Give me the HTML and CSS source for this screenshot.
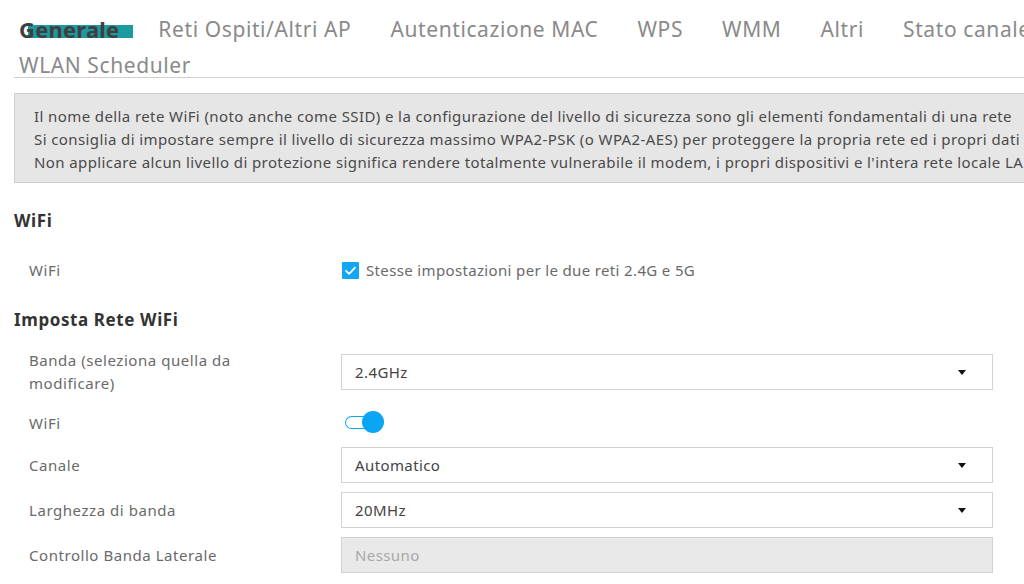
FILE: index.html
```html
<!DOCTYPE html>
<html lang="it">
<head>
<meta charset="utf-8">
<title>WiFi - Generale</title>
<link rel="stylesheet" href="styles.css">
</head>
<body>
<div class="page">
  <ul class="tabs">
    <li class="tab active"><span class="tab-bar"></span><span class="tab-text">Generale</span></li>
    <li class="tab">Reti Ospiti/Altri AP</li>
    <li class="tab">Autenticazione MAC</li>
    <li class="tab">WPS</li>
    <li class="tab">WMM</li>
    <li class="tab">Altri</li>
    <li class="tab">Stato canale</li>
    <li class="tab">WLAN Scheduler</li>
  </ul>

  <div class="info">
    <p>Il nome della rete WiFi (noto anche come SSID) e la configurazione del livello di sicurezza sono gli elementi fondamentali di una rete</p>
    <p>Si consiglia di impostare sempre il livello di sicurezza massimo WPA2-PSK (o WPA2-AES) per proteggere la propria rete ed i propri dati</p>
    <p>Non applicare alcun livello di protezione significa rendere totalmente vulnerabile il modem, i propri dispositivi e l'intera rete locale LAN</p>
  </div>

  <h2 class="section h-wifi">WiFi</h2>
  <div class="row row-check">
    <div class="label">WiFi</div>
    <label class="check">
      <span class="box"><svg width="17" height="17" viewBox="0 0 17 17"><path d="M4 8.8 L7.2 11.8 L13 5.6" fill="none" stroke="#fff" stroke-width="1.8" stroke-linecap="round" stroke-linejoin="round"/></svg></span>
      <span class="check-text">Stesse impostazioni per le due reti 2.4G e 5G</span>
    </label>
  </div>

  <h2 class="section h-set">Imposta Rete WiFi</h2>
  <div class="row row-band">
    <div class="label">Banda (seleziona quella da<br>modificare)</div>
    <div class="select"><span>2.4GHz</span><span class="arrow"></span></div>
  </div>
  <div class="row row-toggle">
    <div class="label">WiFi</div>
    <div class="toggle"><span class="track"></span><span class="knob"></span></div>
  </div>
  <div class="row row-chan">
    <div class="label">Canale</div>
    <div class="select"><span>Automatico</span><span class="arrow"></span></div>
  </div>
  <div class="row row-std">
    <div class="label">Larghezza di banda</div>
    <div class="select"><span>20MHz</span><span class="arrow"></span></div>
  </div>
  <div class="row row-std">
    <div class="label">Controllo Banda Laterale</div>
    <div class="select disabled"><span>Nessuno</span></div>
  </div>
</div>
</body>
</html>
```

FILE: styles.css
```css
html, body {
  margin: 0;
  padding: 0;
  background: #fff;
  overflow: hidden;
}
body {
  font-family: "Noto Sans", "DejaVu Sans", sans-serif;
  color: #444;
  width: 1024px;
  height: 584px;
}
.page {
  width: 1100px;
  padding-left: 14px;
}
.tabs {
  list-style: none;
  margin: 0;
  padding: 16px 0 0 5px;
  display: flex;
  flex-wrap: wrap;
  column-gap: 39px;
  row-gap: 10px;
  width: 1060px;
  height: 78px;
  border-bottom: 1px solid #cfcfcf;
  box-sizing: border-box;
}
.tab {
  font-size: 21px;
  line-height: 26px;
  color: #8a8a8a;
  white-space: nowrap;
  letter-spacing: 0.6px;
}
.tab.active {
  position: relative;
  color: #3f3f3f;
  font-size: 22px;
  font-weight: bold;
  letter-spacing: 0.2px;
}
.tab-text { position: relative; }
.tab-bar {
  position: absolute;
  left: 9px;
  top: 9px;
  width: 105px;
  height: 13px;
  background: #1b9aa0;
}
.info {
  margin-top: 15px;
  height: 90px;
  box-sizing: border-box;
  background: #e6e6e6;
  border: 1px solid #cfcfcf;
  padding: 11px 0 0 19px;
  overflow: hidden;
}
.info p {
  margin: 0;
  font-size: 15px;
  line-height: 23px;
  letter-spacing: 0.4px;
  white-space: nowrap;
  color: #4a4a4a;
}
.section {
  margin: 0;
  font-size: 17px;
  line-height: 24px;
  font-weight: bold;
  letter-spacing: 0.6px;
  color: #333;
}
.h-wifi { margin-top: 26px; }
.h-set { margin-top: 20px; }
.row {
  display: grid;
  grid-template-columns: 327px 652px;
  align-items: center;
}
.label {
  padding-left: 15px;
  font-size: 15px;
  line-height: 23px;
  letter-spacing: 0.55px;
  color: #6a6a6a;
}
.row-check { height: 36px; margin-top: 19px; }
.row-band { height: 46px; margin-top: 17px; }
.row-toggle { height: 46px; margin-top: 5px; }
.row-chan { height: 36px; margin-top: 1px; }
.row-std { height: 36px; margin-top: 9px; }
.check {
  display: flex;
  align-items: center;
  gap: 7px;
  padding-left: 1px;
}
.box {
  width: 17px;
  height: 17px;
  background: #13a6f2;
  border-radius: 1px;
  display: block;
}
.box svg { display: block; }
.check-text {
  font-size: 15px;
  letter-spacing: 0.35px;
  color: #6a6a6a;
}
.select {
  height: 36px;
  box-sizing: border-box;
  border: 1px solid #d0d3d6;
  background: #fff;
  display: flex;
  align-items: center;
  justify-content: space-between;
  padding: 0 26px 0 13px;
  font-size: 15px;
  letter-spacing: 0.4px;
  color: #444;
}
.select.disabled {
  background: #e9e9e9;
  color: #a8a8a8;
}
.arrow {
  width: 0;
  height: 0;
  border-left: 4.5px solid transparent;
  border-right: 4.5px solid transparent;
  border-top: 5px solid #111;
}
.toggle {
  position: relative;
  width: 42px;
  height: 24px;
  margin-left: 4px;
}
.track {
  position: absolute;
  left: 0;
  top: 5px;
  width: 28px;
  height: 13px;
  box-sizing: border-box;
  border: 1.5px solid #0aa5f5;
  border-right: none;
  border-radius: 7px 0 0 7px;
  background: #fff;
}
.knob {
  position: absolute;
  left: 17px;
  top: 0;
  width: 22px;
  height: 22px;
  border-radius: 50%;
  background: #0aa5f5;
}
```
